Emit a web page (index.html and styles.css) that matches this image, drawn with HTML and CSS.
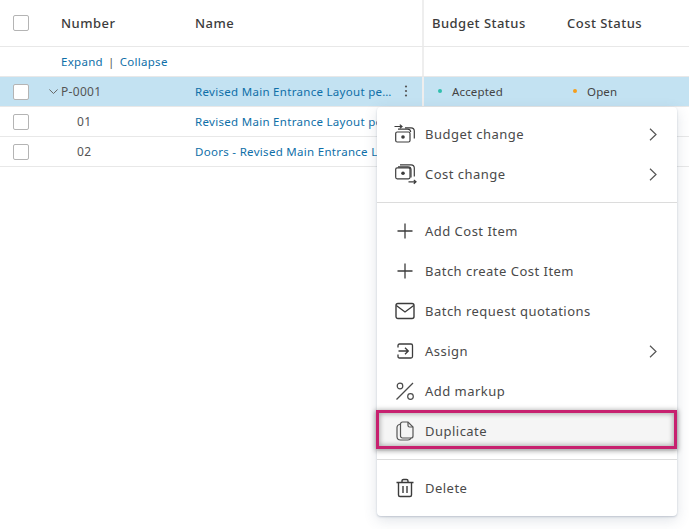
FILE: index.html
```html
<!DOCTYPE html>
<html lang="en">
<head>
<meta charset="utf-8">
<title>Change orders</title>
<link rel="stylesheet" href="styles.css">
</head>
<body>
<div class="table">
  <div class="row head">
    <div class="c-check"><span class="box"></span></div>
    <div class="c-num">Number</div>
    <div class="c-name">Name</div>
    <div class="c-budget">Budget Status</div>
    <div class="c-cost">Cost Status</div>
  </div>
  <div class="row tools">
    <div class="c-check"></div>
    <div class="c-num wide"><a class="link">Expand</a><span class="sep">|</span><a class="link">Collapse</a></div>
    <div class="c-budget"></div>
  </div>
  <div class="row data selected">
    <div class="c-check"><span class="box"></span></div>
    <div class="c-num">
      <svg class="chev" width="9" height="5" viewBox="0 0 9 5"><path d="M.4.5 4.500 4.500 8.600.5" fill="none" stroke="#666" stroke-width="1"/></svg>P-0001
    </div>
    <div class="c-name"><a class="link trunc">Revised Main Entrance Layout per ASI</a>
      <svg class="dots" width="4" height="12" viewBox="0 0 4 12"><circle cx="2" cy="1.500" r="1.100"/><circle cx="2" cy="6" r="1.100"/><circle cx="2" cy="10.500" r="1.100"/></svg>
    </div>
    <div class="c-budget status"><i class="dot teal"></i>Accepted</div>
    <div class="c-cost status"><i class="dot orange"></i>Open</div>
  </div>
  <div class="row data">
    <div class="c-check"><span class="box"></span></div>
    <div class="c-num sub">01</div>
    <div class="c-name"><a class="link trunc">Revised Main Entrance Layout per ASI</a></div>
    <div class="c-budget"></div>
  </div>
  <div class="row data">
    <div class="c-check"><span class="box"></span></div>
    <div class="c-num sub">02</div>
    <div class="c-name"><a class="link trunc">Doors - Revised Main Entrance Layout per ASI</a></div>
    <div class="c-budget"></div>
  </div>
</div>

<div class="menu">
  <div class="item">
    <svg class="ico" width="20" height="20" viewBox="0 0 20 20" fill="none" stroke="#3c3c3c" stroke-width="1.200"><path d="M-.5 2.500h7.500M4.800.6 7 2.500 4.800 4.400"/><rect x=".7" y="8" width="14.300" height="10" rx="1.500"/><path d="M3 5.200h9.500c1.700 0 3 1 3.200 2.800"/><path d="M10 3.800h6c2 0 3.300 1.300 3.300 3.200v7.500"/><circle cx="8" cy="13" r="1.800" fill="#3c3c3c" stroke="none"/></svg>
    <span class="lbl">Budget change</span><svg class="arrow" width="8" height="13" viewBox="0 0 8 13"><path d="M1 .7 7 6.500 1 12.300" fill="none" stroke="#555" stroke-width="1.200"/></svg>
  </div>
  <div class="item">
    <svg class="ico" width="20" height="20" viewBox="0 0 20 20" fill="none" stroke="#3c3c3c" stroke-width="1.200"><rect x=".7" y="3.800" width="14.300" height="11" rx="1.500"/><path d="M3 2.800h10c1.700 0 3 1 3 2.800v8"/><path d="M5 .8h11c2 0 3.300 1.300 3.300 3.200v8.500"/><circle cx="8" cy="9.300" r="1.800" fill="#3c3c3c" stroke="none"/><path d="M13.500 17.800H21M18.800 15.900l2.200 1.900-2.200 1.900"/></svg>
    <span class="lbl">Cost change</span><svg class="arrow" width="8" height="13" viewBox="0 0 8 13"><path d="M1 .7 7 6.500 1 12.300" fill="none" stroke="#555" stroke-width="1.200"/></svg>
  </div>
  <hr class="rule">
  <div class="item">
    <svg class="ico" width="20" height="20" viewBox="0 0 20 20" fill="none" stroke="#3c3c3c" stroke-width="1.300"><path d="M2.500 10h15M10 2.500v15"/></svg>
    <span class="lbl">Add Cost Item</span>
  </div>
  <div class="item">
    <svg class="ico" width="20" height="20" viewBox="0 0 20 20" fill="none" stroke="#3c3c3c" stroke-width="1.300"><path d="M2.500 10h15M10 2.500v15"/></svg>
    <span class="lbl">Batch create Cost Item</span>
  </div>
  <div class="item">
    <svg class="ico" width="20" height="20" viewBox="0 0 20 20" fill="none" stroke="#3c3c3c" stroke-width="1.400"><rect x="1" y="2.500" width="18" height="15" rx="2"/><path d="M1.300 4.500 10 11l8.700-6.500"/></svg>
    <span class="lbl">Batch request quotations</span>
  </div>
  <div class="item">
    <svg class="ico" width="20" height="20" viewBox="0 0 20 20" fill="none" stroke="#3c3c3c" stroke-width="1.300"><path d="M3 6.500V4.500C3 3.500 3.600 3 4.500 3H16c1 0 1.500.5 1.500 1.500v11c0 1-.5 1.500-1.500 1.500H4.500c-.9 0-1.500-.5-1.500-1.500v-2"/><path d="M3.500 10H13M10 6.800l3.300 3.200-3.300 3.200"/></svg>
    <span class="lbl">Assign</span><svg class="arrow" width="8" height="13" viewBox="0 0 8 13"><path d="M1 .7 7 6.500 1 12.300" fill="none" stroke="#555" stroke-width="1.200"/></svg>
  </div>
  <div class="item">
    <svg class="ico" width="20" height="20" viewBox="0 0 20 20" fill="none" stroke="#4a4a4a" stroke-width="1.200"><path d="M1.500 18.500 18 2"/><circle cx="5" cy="5" r="2.800"/><circle cx="15.500" cy="15.500" r="2.800"/></svg>
    <span class="lbl">Add markup</span>
  </div>
  <div class="item marked">
    <svg class="ico" width="20" height="20" viewBox="0 0 20 20" fill="none" stroke="#555" stroke-width="1.200"><path d="M7.500 1h5.500l5 5v9a2 2 0 0 1-2 2H7.500a2 2 0 0 1-2-2V3a2 2 0 0 1 2-2Z"/><path d="M13 1v3.500A1.500 1.500 0 0 0 14.500 6H18"/><path d="M5.500 3C3.500 3.500 2 4.500 2 6.500v9c0 2.300 1.700 3.500 3.500 3.500H13c1.500 0 2.500-.7 3-2"/></svg>
    <span class="lbl">Duplicate</span>
  </div>
  <hr class="rule">
  <div class="item">
    <svg class="ico" width="20" height="20" viewBox="0 0 20 20" fill="none" stroke="#3c3c3c" stroke-width="1.400"><path d="M1.500 4.500h17M7 4.500V3c0-1 .6-1.500 1.500-1.500h3c.9 0 1.500.5 1.500 1.500v1.500M3.500 4.500V17c0 1 .6 1.500 1.500 1.500h10c.9 0 1.500-.5 1.500-1.500V4.500M8 8v7M12 8v7"/></svg>
    <span class="lbl">Delete</span>
  </div>
</div>
</body>
</html>
```
FILE: styles.css
```css
* { box-sizing: border-box; }
html, body { margin: 0; padding: 0; height: 100%; overflow: hidden; background: #fff; }
body { font-family: "Noto Sans", sans-serif; font-size: 12px; color: #3c3c3c; position: relative; width: 689px; height: 529px; }
.table { display: flex; flex-direction: column; width: 689px; }
.row { display: grid; grid-template-columns: 61px 134px 227px 145px 122px; align-items: center; border-bottom: 1px solid #e8e8e8; }
.head { height: 47px; font-size: 13px; font-weight: 500; letter-spacing: .47px; color: #3c3c3c; }
.tools { height: 30px; font-size: 11.500px; letter-spacing: .3px; }
.data { height: 30px; letter-spacing: .3px; color: #555; }
.selected { background: #c3e2f2; }
.c-check { display: flex; padding-left: 13px; }
.box { width: 16px; height: 16px; border: 1px solid #b4b4b4; border-radius: 2px; background: #fff; display: block; }
.c-num { display: flex; align-items: center; position: relative; height: 100%; }
.wide { grid-column: 2 / 4; }
.chev { position: absolute; left: -12px; top: 12px; }
.sub { padding-left: 16px; }
.c-name { display: flex; align-items: center; gap: 9px; height: 100%; min-width: 0; }
.tools .c-num, .data .c-num, .data .c-name, .data .c-budget, .data .c-cost { padding-bottom: 1px; }
.link { color: #0f6fa8; }
.trunc { white-space: nowrap; overflow: hidden; text-overflow: ellipsis; width: 200px; font-size: 11.500px; }
.sep { margin: 0 5px; color: #555; }
.dots { fill: #555; flex: none; }
.c-budget { height: 100%; padding-left: 8px; border-left: 2px solid #eeeeee; display: flex; align-items: center; }
.c-cost { height: 100%; display: flex; align-items: center; }
.status { font-size: 11.500px; letter-spacing: .15px; color: #444; }
.dot { width: 4px; height: 4px; border-radius: 50%; margin-right: 10px; flex: none; }
.c-budget.status { padding-left: 14px; }
.c-cost.status { padding-left: 6px; }
.teal { background: #2fbfae; }
.orange { background: #f59e1c; }
.menu { position: absolute; left: 377px; top: 107px; width: 300px; height: 409px; background: #fff; border-radius: 4px; padding-top: 7px; box-shadow: 0 1px 2px rgba(60,80,110,.25), 0 4px 14px rgba(60,80,110,.16); }
.item { height: 40px; display: flex; align-items: center; padding-left: 18px; font-size: 13px; letter-spacing: .48px; color: #4a4a4a; position: relative; }
.ico { flex: none; margin-right: 10px; overflow: visible; }
.lbl { flex: 1; }
.arrow { flex: none; margin-right: 20px; }
.rule { margin: 8px 0; height: 1px; border: 0; background: #dcdcdc; }
.marked { background: #f5f5f5; }
.marked::after { content: ""; position: absolute; left: -1px; right: 0; top: -1px; bottom: 2px; border: 3px solid #c7216f; box-shadow: 0 1px 5px 1px rgba(0,0,0,.35), inset 0 0 5px 1px rgba(0,0,0,.3); }
```
